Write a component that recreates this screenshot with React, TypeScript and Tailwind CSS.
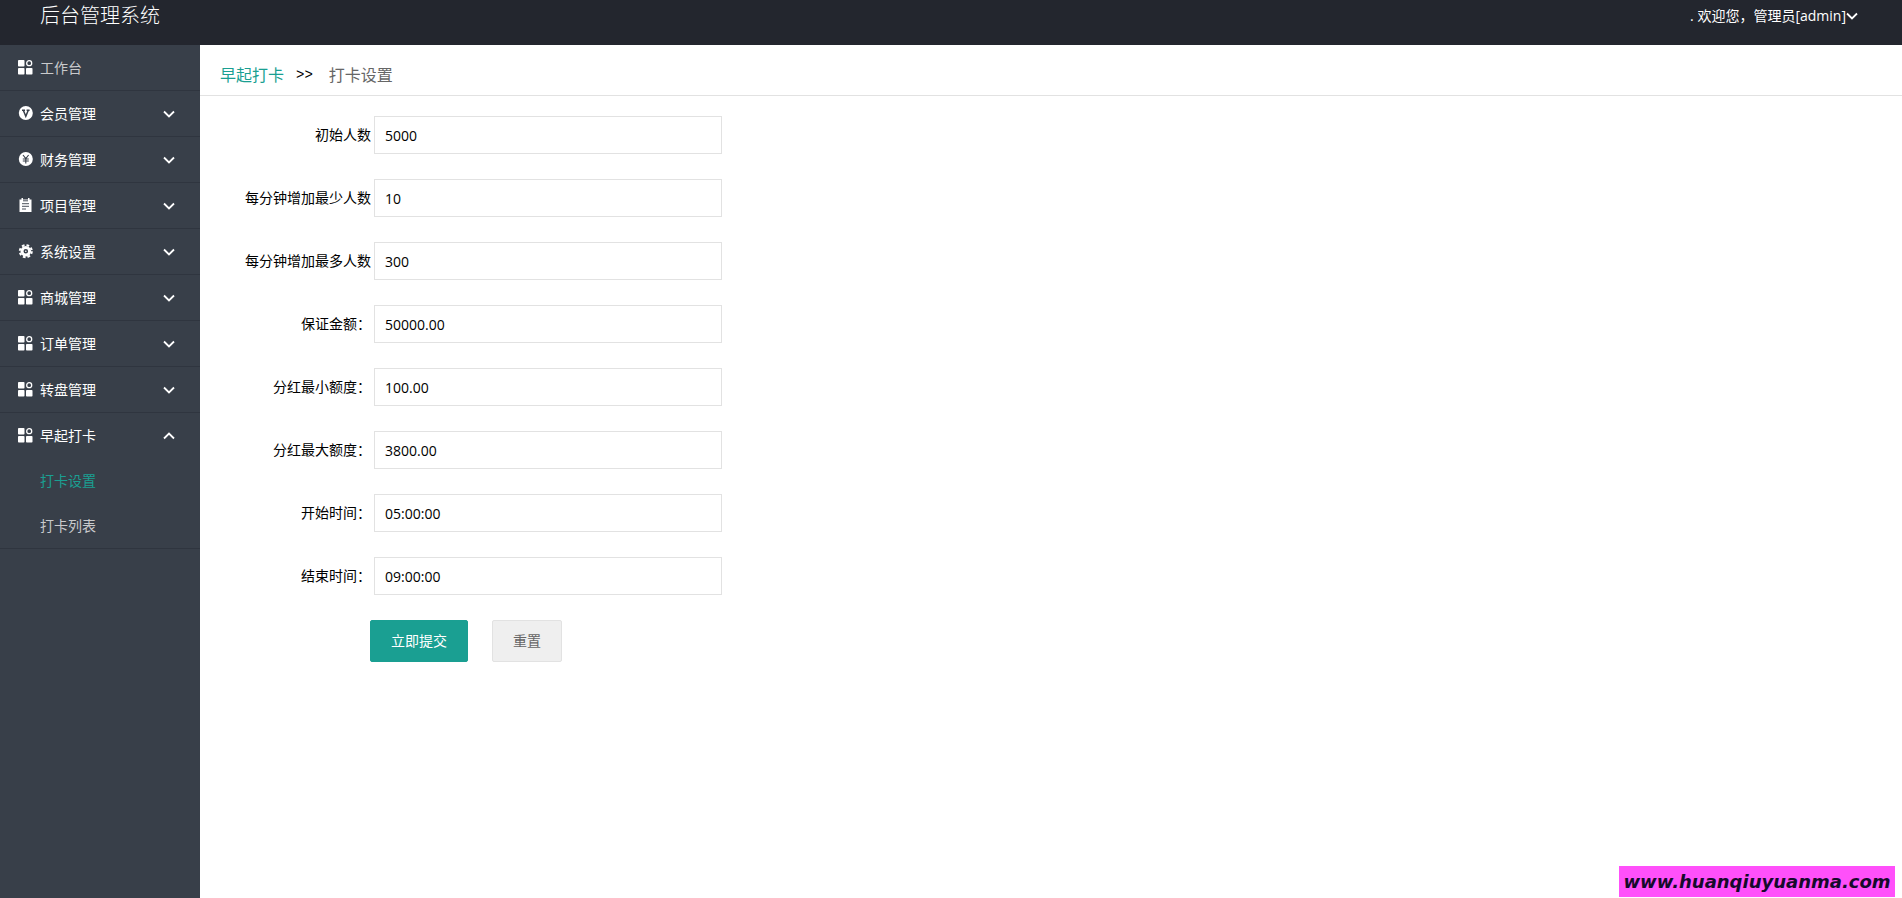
import { useState } from 'react';

type IconName = 'grid' | 'member' | 'money' | 'project' | 'gear';

interface MenuItem {
  title: string;
  icon: IconName;
  children?: string[];
}

const menus: MenuItem[] = [
  { title: '会员管理', icon: 'member' },
  { title: '财务管理', icon: 'money' },
  { title: '项目管理', icon: 'project' },
  { title: '系统设置', icon: 'gear' },
  { title: '商城管理', icon: 'grid' },
  { title: '订单管理', icon: 'grid' },
  { title: '转盘管理', icon: 'grid' },
  { title: '早起打卡', icon: 'grid', children: ['打卡设置', '打卡列表'] },
];

const fields = [
  { name: 'base_num', label: '初始人数', value: '5000' },
  { name: 'min_num', label: '每分钟增加最少人数', value: '10' },
  { name: 'max_num', label: '每分钟增加最多人数', value: '300' },
  { name: 'deposit', label: '保证金额：', value: '50000.00' },
  { name: 'min_bonus', label: '分红最小额度：', value: '100.00' },
  { name: 'max_bonus', label: '分红最大额度：', value: '3800.00' },
  { name: 'start_time', label: '开始时间：', value: '05:00:00' },
  { name: 'end_time', label: '结束时间：', value: '09:00:00' },
];

export default function App() {
  return (
    <div className="flex min-h-screen flex-col bg-white font-['Open_Sans','Noto_Sans_CJK_SC',sans-serif] text-sm text-black">
      <Header />
      <div className="flex flex-1">
        <Sidebar />
        <main className="min-w-0 flex-1">
          <nav className="flex h-[51px] items-center border-b border-[#e2e2e2] px-5 pt-2.5 text-base text-[#666]">
            <a href="#" className="text-[#1a9f92]">早起打卡</a>
            <span className="mr-4 ml-3 font-['Liberation_Mono',monospace] text-sm text-black">&gt;&gt;</span>
            <span>打卡设置</span>
          </nav>
          <SettingForm />
        </main>
      </div>
      <div className="fixed right-[7px] bottom-px flex h-[31px] w-[276px] items-center justify-center bg-[#ff50fa] font-['DejaVu_Sans',sans-serif] text-lg leading-none font-bold text-[#160a2c] italic">
        www.huanqiuyuanma.com
      </div>
    </div>
  );
}

function Header() {
  return (
    <header className="flex h-[45px] items-start justify-between bg-[#23262e] pr-11 pl-10 text-white">
      <h1 className="text-xl leading-8 font-light">后台管理系统</h1>
      <button type="button" className="flex items-center text-sm leading-8">
        . 欢迎您，管理员[admin]
        <Chevron />
      </button>
    </header>
  );
}

function Sidebar() {
  const [opened, setOpened] = useState('早起打卡');

  return (
    <aside className="w-[200px] shrink-0 bg-[#383f49] text-white">
      <ul>
        <li className="border-b border-[#2f353f]">
          <a href="#" className="flex h-[45px] items-center gap-[7px] pl-[18px] text-[#c9cacc]">
            <MenuIcon name="grid" />
            工作台
          </a>
        </li>
        {menus.map((menu) => (
          <li key={menu.title} className="border-b border-[#2f353f]">
            <button
              type="button"
              onClick={() => setOpened(opened === menu.title ? '' : menu.title)}
              className="flex h-[45px] w-full items-center gap-[7px] pr-[25px] pl-[18px]"
            >
              <MenuIcon name={menu.icon} />
              <span className="flex-1 text-left">{menu.title}</span>
              <Chevron up={opened === menu.title} />
            </button>
            {opened === menu.title &&
              menu.children?.map((child, i) => (
                <a
                  key={child}
                  href="#"
                  className={`flex h-[45px] items-center pl-10 ${i === 0 ? 'text-[#1a9f92]' : 'text-[#c9cacc]'}`}
                >
                  {child}
                </a>
              ))}
          </li>
        ))}
      </ul>
    </aside>
  );
}

function SettingForm() {
  return (
    <form className="pt-5" onSubmit={(e) => e.preventDefault()}>
      {fields.map((field) => (
        <div key={field.name} className="mb-[25px] flex items-center gap-[3px]">
          <label htmlFor={field.name} className="w-[171px] text-right">{field.label}</label>
          <input
            id={field.name}
            name={field.name}
            defaultValue={field.value}
            className="h-[38px] w-[348px] border border-[#e2e2e2] px-2.5 text-sm outline-none focus:border-[#c9c9c9]"
          />
        </div>
      ))}
      <div className="flex gap-6 pl-[170px]">
        <button type="submit" className="h-[42px] rounded-xs border border-[#1a9f92] bg-[#1a9f92] px-5 text-white">立即提交</button>
        <button type="reset" className="h-[42px] rounded-xs border border-[#e2e2e2] bg-[#efefef] px-5 text-[#666]">重置</button>
      </div>
    </form>
  );
}

function Chevron({ up = false }: { up?: boolean }) {
  return (
    <svg className="h-3 w-3" viewBox="0 0 12 12" fill="none" stroke="currentColor" strokeWidth={1.8}>
      <path d={up ? 'M1 8.5l5-5 5 5' : 'M1 3.5l5 5 5-5'} />
    </svg>
  );
}

function MenuIcon({ name }: { name: IconName }) {
  return (
    <svg className="h-[15px] w-[15px] shrink-0 text-white" viewBox="0 0 15 15" fill="currentColor">
      {name === 'grid' && (
        <>
          <rect x="0" y="0" width="6.5" height="6.5" rx="0.8" />
          <rect x="0" y="8" width="6.5" height="6.5" rx="0.8" />
          <rect x="8" y="8" width="6.5" height="6.5" rx="0.8" />
          <circle cx="11.2" cy="3.2" r="2.5" fill="none" stroke="currentColor" strokeWidth="1.3" />
        </>
      )}
      {name === 'member' && (
        <>
          <circle cx="7.8" cy="7" r="7" />
          <path d="M4 4.2h3M8.6 4.2h3M5.3 4.2l2.5 6 2.5-6" fill="none" stroke="#383f49" strokeWidth="1.5" />
        </>
      )}
      {name === 'money' && (
        <>
          <circle cx="7.8" cy="7" r="7" />
          <path d="M5 3l2.8 3.5L10.6 3M4.8 7h6M4.8 9h6M7.8 6.5v5" fill="none" stroke="#383f49" strokeWidth="1.1" />
        </>
      )}
      {name === 'project' && (
        <>
          <path d="M1.5 1.5h2V0h1.5v1.5h5V0h1.5v1.5h2V14h-12z" />
          <path d="M5 2.8h5M4 5.7h7M4 8.3h7M4 11h4" fill="none" stroke="#383f49" strokeWidth="0.9" />
        </>
      )}
      {name === 'gear' && (
        <>
          <circle cx="7.8" cy="7.2" r="3.8" fill="none" stroke="currentColor" strokeWidth="3" />
          <circle cx="7.8" cy="7.2" r="6" fill="none" stroke="currentColor" strokeWidth="2" strokeDasharray="2.7 2.01" />
          <circle cx="7.8" cy="7.2" r="0.8" />
        </>
      )}
    </svg>
  );
}
